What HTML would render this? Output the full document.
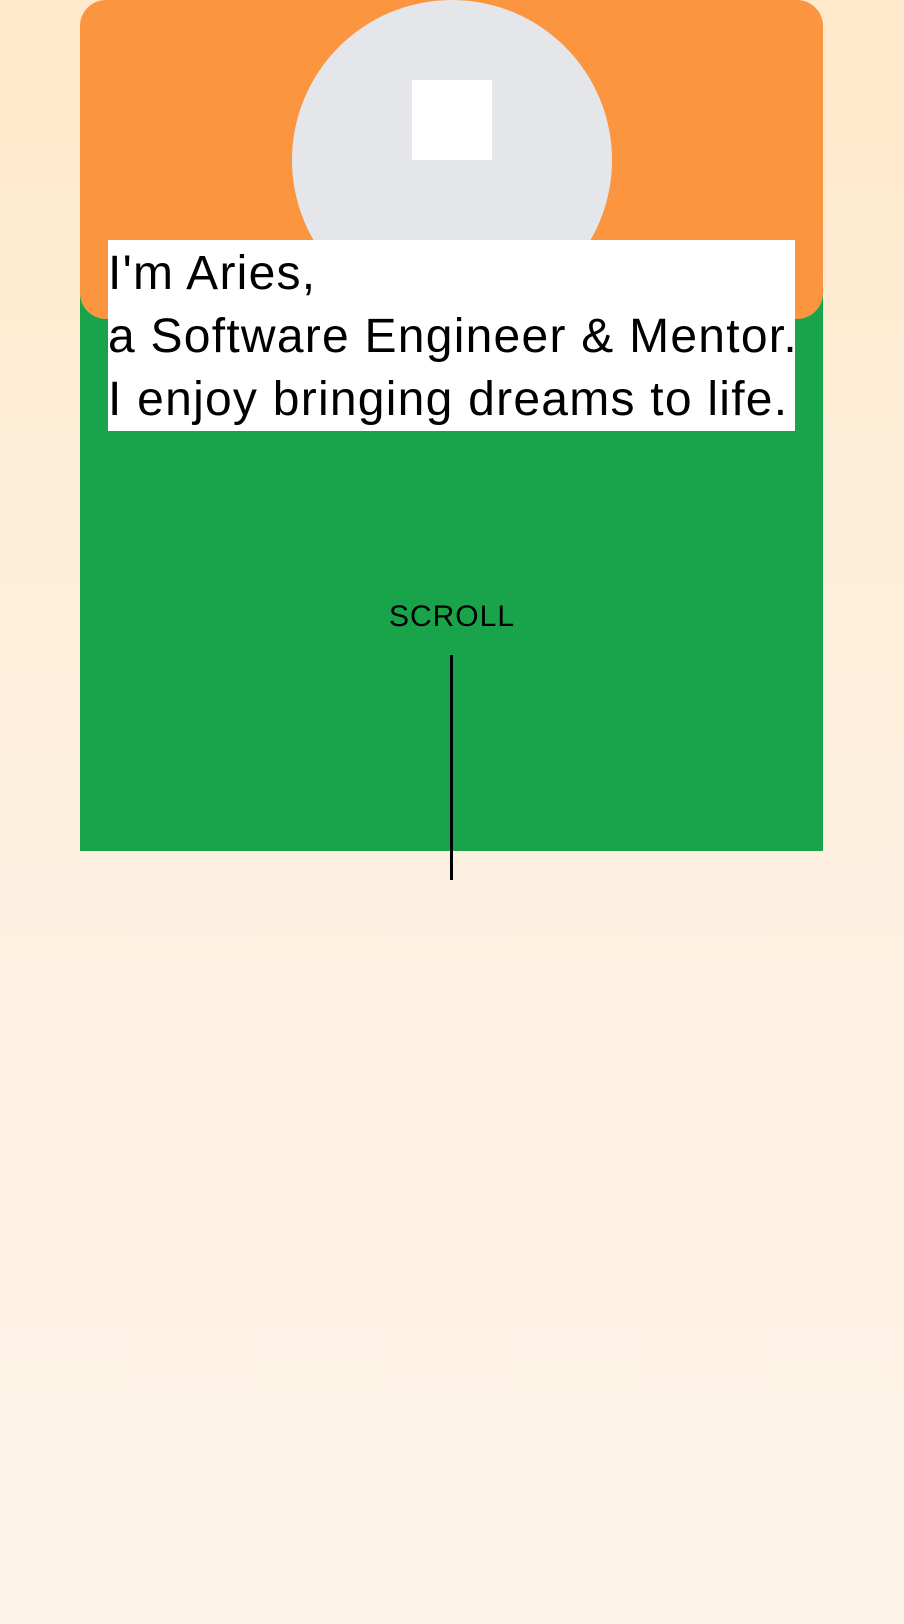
<!DOCTYPE html>
<html><head><style>
html,body{margin:0;padding:0;}
body{width:904px;height:1624px;background:linear-gradient(to bottom,#ffe9cb 0%,#fef0df 50%,#fdf4e8 100%);position:relative;overflow:hidden;font-family:"Liberation Sans",sans-serif;}
.green{position:absolute;left:80px;top:200px;width:743px;height:651px;background:#19a34b;}
.orange{position:absolute;left:80px;top:0;width:743px;height:319px;background:#fb953f;border-radius:26px;}
.circle{position:absolute;left:292px;top:0;width:320px;height:320px;border-radius:50%;background:#e5e6ea;}
.sq{position:absolute;left:412px;top:80px;width:80px;height:80px;background:#fff;}
.txt{position:absolute;left:108px;top:240px;width:687px;height:191px;background:#fff;font-size:48px;line-height:63px;color:#000;white-space:nowrap;letter-spacing:1.25px;}
.txt span{position:relative;top:2px;}
.scroll{position:absolute;left:0;width:904px;top:600px;text-align:center;font-size:30px;color:#000;letter-spacing:1px;}
.line{position:absolute;left:450px;top:655px;width:3px;height:225px;background:#000;}
</style></head><body>
<div class="green"></div>
<div class="orange"></div>
<div class="circle"></div>
<div class="sq"></div>
<div class="txt"><span>I'm Aries,<br>a Software Engineer &amp; Mentor.<br>I enjoy bringing dreams to life.</span></div>
<div class="scroll">SCROLL</div>
<div class="line"></div>
</body></html>
